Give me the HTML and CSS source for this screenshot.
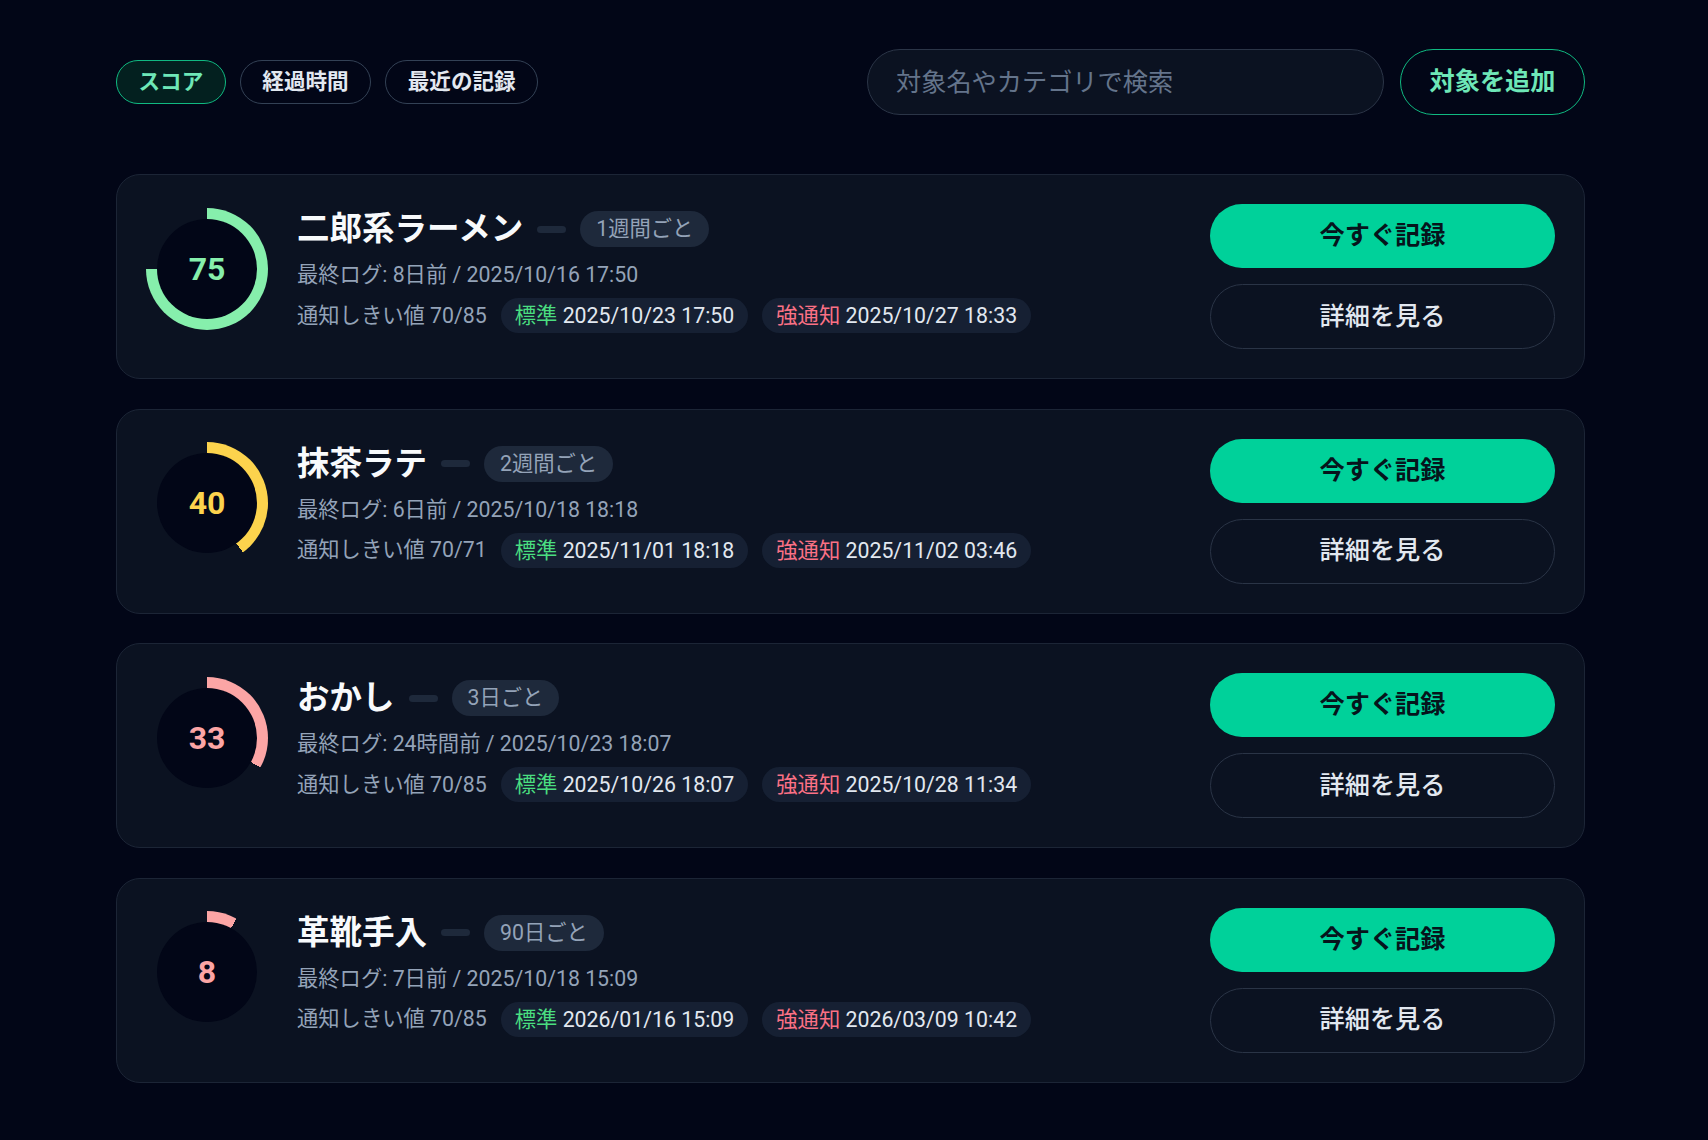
FILE: index.html
```html
<!DOCTYPE html>
<html lang="ja">
<head>
<meta charset="utf-8">
<title>記録リスト</title>
<link rel="stylesheet" href="styles.css">
</head>
<body>
<div class="page">
  <header class="toolbar">
    <div class="chips">
      <button class="chip active">スコア</button>
      <button class="chip">経過時間</button>
      <button class="chip">最近の記録</button>
    </div>
    <div class="tools">
      <input class="search" type="text" placeholder="対象名やカテゴリで検索">
      <button class="add">対象を追加</button>
    </div>
  </header>

  <main class="list">
    <article class="card">
      <div class="summary">
        <div class="ring green" style="--p:75"><div class="ring-inner">75</div></div>
        <div class="info">
          <div class="title-row"><h2 class="name">二郎系ラーメン</h2><span class="cat"></span><span class="freq">1週間ごと</span></div>
          <p class="last">最終ログ: 8日前 / 2025/10/16 17:50</p>
          <div class="notify"><span class="threshold">通知しきい値 70/85</span><span class="tag"><span class="std">標準</span> 2025/10/23 17:50</span><span class="tag"><span class="strong">強通知</span> 2025/10/27 18:33</span></div>
        </div>
      </div>
      <div class="actions"><button class="btn primary">今すぐ記録</button><button class="btn secondary">詳細を見る</button></div>
    </article>

    <article class="card">
      <div class="summary">
        <div class="ring yellow" style="--p:40"><div class="ring-inner">40</div></div>
        <div class="info">
          <div class="title-row"><h2 class="name">抹茶ラテ</h2><span class="cat"></span><span class="freq">2週間ごと</span></div>
          <p class="last">最終ログ: 6日前 / 2025/10/18 18:18</p>
          <div class="notify"><span class="threshold">通知しきい値 70/71</span><span class="tag"><span class="std">標準</span> 2025/11/01 18:18</span><span class="tag"><span class="strong">強通知</span> 2025/11/02 03:46</span></div>
        </div>
      </div>
      <div class="actions"><button class="btn primary">今すぐ記録</button><button class="btn secondary">詳細を見る</button></div>
    </article>

    <article class="card">
      <div class="summary">
        <div class="ring pink" style="--p:33"><div class="ring-inner">33</div></div>
        <div class="info">
          <div class="title-row"><h2 class="name">おかし</h2><span class="cat"></span><span class="freq">3日ごと</span></div>
          <p class="last">最終ログ: 24時間前 / 2025/10/23 18:07</p>
          <div class="notify"><span class="threshold">通知しきい値 70/85</span><span class="tag"><span class="std">標準</span> 2025/10/26 18:07</span><span class="tag"><span class="strong">強通知</span> 2025/10/28 11:34</span></div>
        </div>
      </div>
      <div class="actions"><button class="btn primary">今すぐ記録</button><button class="btn secondary">詳細を見る</button></div>
    </article>

    <article class="card">
      <div class="summary">
        <div class="ring pink" style="--p:8"><div class="ring-inner">8</div></div>
        <div class="info">
          <div class="title-row"><h2 class="name">革靴手入</h2><span class="cat"></span><span class="freq">90日ごと</span></div>
          <p class="last">最終ログ: 7日前 / 2025/10/18 15:09</p>
          <div class="notify"><span class="threshold">通知しきい値 70/85</span><span class="tag"><span class="std">標準</span> 2026/01/16 15:09</span><span class="tag"><span class="strong">強通知</span> 2026/03/09 10:42</span></div>
        </div>
      </div>
      <div class="actions"><button class="btn primary">今すぐ記録</button><button class="btn secondary">詳細を見る</button></div>
    </article>
  </main>
</div>
</body>
</html>
```

FILE: styles.css
```css
* { box-sizing: border-box; }

html, body {
  margin: 0;
  background: #020617;
}

body {
  font-family: Roboto, "Noto Sans CJK JP", sans-serif;
  color: #e2e8f0;
}

button, input {
  font-family: inherit;
}

.page {
  padding: 49px 123px 58px 116px;
}

.toolbar {
  display: flex;
  align-items: center;
  justify-content: space-between;
  height: 66px;
}

.chips {
  display: flex;
  gap: 14px;
}

.chip {
  height: 44px;
  padding: 0 21.5px;
  border: 1px solid #334155;
  border-radius: 22px;
  background: transparent;
  color: #e2e8f0;
  font-size: 21.6px;
  font-weight: 700;
  line-height: 42px;
}

.chip.active {
  border-color: #10b981;
  background: #03201f;
  color: #6ee7b7;
}

.tools {
  display: flex;
  gap: 16px;
}

.search {
  width: 517px;
  height: 66px;
  padding: 0 27px 0 28px;
  border: 1px solid #2b3547;
  border-radius: 33px;
  background: #0b1221;
  color: #e2e8f0;
  font-size: 25.2px;
  line-height: 1.2;
  outline: none;
}

.search::placeholder {
  color: #64748b;
}

.add {
  width: 185px;
  height: 66px;
  padding-top: 2px;
  border: 1.5px solid #10b981;
  border-radius: 33px;
  background: #020617;
  color: #6ee7b7;
  font-size: 25.2px;
  font-weight: 700;
  line-height: 1.2;
}

.list {
  margin-top: 59px;
  display: flex;
  flex-direction: column;
  gap: 29.5px;
}

.card {
  display: flex;
  justify-content: space-between;
  align-items: flex-start;
  padding: 29px;
  border: 1px solid #1c2536;
  border-radius: 24px;
  background: #0b1221;
}

.summary {
  display: flex;
  align-items: center;
  gap: 29px;
}

.ring {
  flex: none;
  width: 122px;
  height: 122px;
  border-radius: 50%;
  background: conic-gradient(var(--c) calc(var(--p) * 1%), transparent 0);
  display: grid;
  place-items: center;
}

.ring.green { --c: #86efac; }
.ring.yellow { --c: #fcd34d; }
.ring.pink { --c: #fca5a5; }

.ring-inner {
  width: 100px;
  height: 100px;
  border-radius: 50%;
  background: #020617;
  display: grid;
  place-items: center;
  color: var(--c);
  font-size: 32px;
  font-weight: 700;
  line-height: 1;
}

.info {
  display: flex;
  flex-direction: column;
  padding-top: 1px;
}

.title-row {
  display: flex;
  align-items: center;
  gap: 14px;
  height: 48px;
}

.name {
  margin: 0;
  font-size: 32.5px;
  font-weight: 700;
  line-height: 48px;
  color: #f8fafc;
}

.cat {
  width: 29px;
  height: 7px;
  border-radius: 4px;
  background: #1e293b;
}

.freq {
  height: 36px;
  padding: 0 16px;
  border-radius: 18px;
  background: #1e293b;
  color: #94a3b8;
  font-size: 21.3px;
  line-height: 36px;
}

.last {
  margin: 6px 0 0;
  font-size: 21.3px;
  line-height: 32px;
  color: #94a3b8;
}

.notify {
  margin-top: 7px;
  display: flex;
  align-items: center;
  gap: 14px;
  font-size: 21.3px;
}

.threshold {
  color: #94a3b8;
  line-height: 32px;
}

.tag {
  height: 35px;
  padding: 0 14px;
  border-radius: 18px;
  background: #162033;
  color: #e2e8f0;
  line-height: 35px;
}

.std { color: #4ade80; }
.strong { color: #fb7185; }

.actions {
  flex: none;
  width: 345px;
  display: flex;
  flex-direction: column;
  gap: 16px;
}

.btn {
  height: 64px;
  padding-top: 2px;
  border-radius: 33px;
  font-size: 25.2px;
  line-height: 1.2;
}

.btn.primary {
  border: none;
  background: #00d19a;
  color: #06141c;
  font-weight: 700;
}

.btn.secondary {
  height: 65px;
  border: 1px solid #2a3446;
  background: transparent;
  color: #e2e8f0;
  font-weight: 500;
}
```
